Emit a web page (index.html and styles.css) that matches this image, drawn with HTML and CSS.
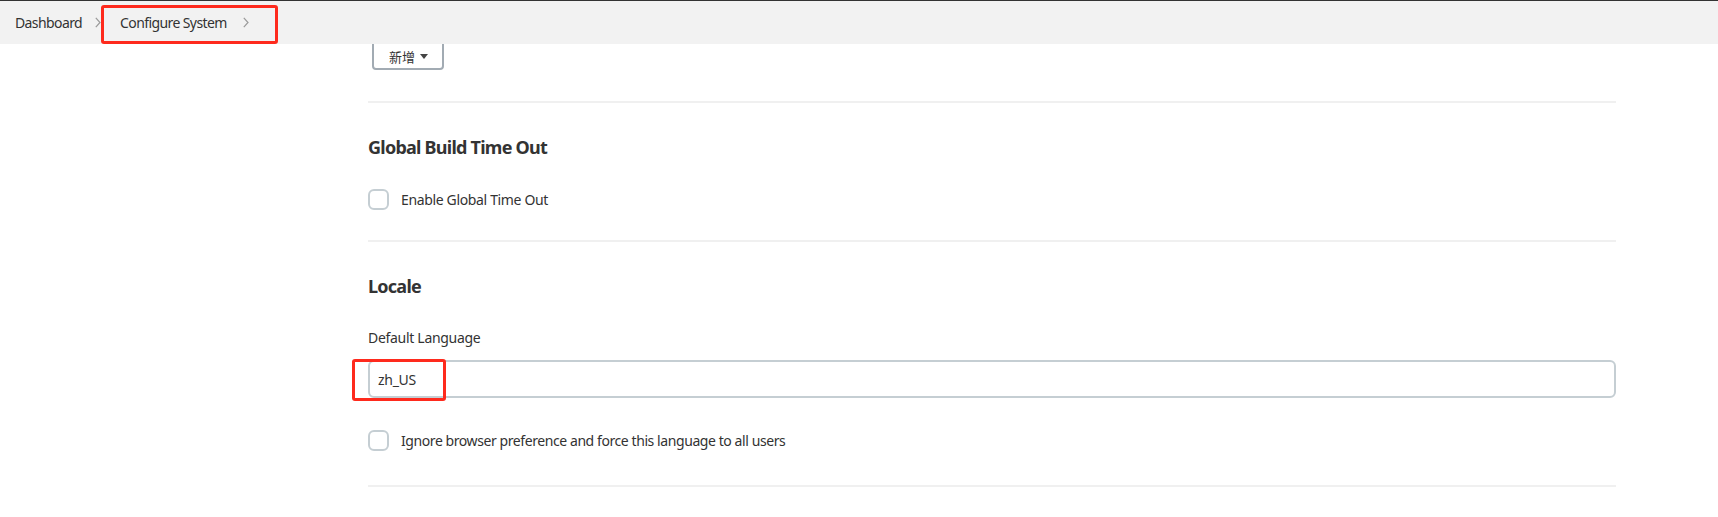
FILE: index.html
```html
<!DOCTYPE html>
<html lang="en">
<head>
<meta charset="utf-8">
<title>Configure System</title>
<link rel="stylesheet" href="styles.css">
</head>
<body>
<header class="breadcrumbs">
  <ol class="crumbs">
    <li class="crumb"><a class="crumb-link">Dashboard</a></li>
    <li class="crumb-sep"><svg class="chev" viewBox="0 0 6 11" width="6" height="11"><path d="M0.8 0.8 L5 5.5 L0.8 10.2" fill="none" stroke="#9a9a9a" stroke-width="1.2"/></svg></li>
    <li class="crumb crumb-current">
      <a class="crumb-link">Configure System</a>
      <svg class="chev" viewBox="0 0 6 11" width="6" height="11"><path d="M0.8 0.8 L5 5.5 L0.8 10.2" fill="none" stroke="#9a9a9a" stroke-width="1.2"/></svg>
      <span class="annot annot-crumb"></span>
    </li>
  </ol>
</header>
<main class="content">
  <div class="add-row">
    <button class="dropdown-btn" type="button">新增<span class="caret"></span></button>
  </div>
  <section class="section section-timeout">
    <h2 class="section-title">Global Build Time Out</h2>
    <label class="checkbox checkbox-first"><span class="box"></span><span class="checkbox-text">Enable Global Time Out</span></label>
  </section>
  <section class="section section-locale">
    <h2 class="section-title">Locale</h2>
    <div class="field-label">Default Language</div>
    <div class="input-wrap">
      <input class="text-input" type="text" value="zh_US">
      <span class="annot annot-input"></span>
    </div>
    <label class="checkbox checkbox-last"><span class="box"></span><span class="checkbox-text">Ignore browser preference and force this language to all users</span></label>
  </section>
  <div class="section section-end"></div>
</main>
</body>
</html>
```
FILE: styles.css
```css
* { box-sizing: border-box; }
html, body { margin: 0; padding: 0; background: #fff; }
body {
  font-family: "Noto Sans", "Open Sans", "Noto Sans CJK SC", sans-serif;
  color: #333;
  font-size: 14px;
}
.breadcrumbs {
  position: sticky;
  top: 0;
  z-index: 5;
  height: 44px;
  background: #f2f2f2;
  border-top: 1px solid #333;
}
.crumbs {
  list-style: none;
  margin: 0;
  padding: 0 0 0 15px;
  height: 43px;
  display: flex;
  align-items: center;
}
.crumb { display: flex; align-items: center; height: 20px; line-height: 20px; }
.crumb-link { font-size: 14px; color: #333; letter-spacing: -0.6px; }
.crumb-sep { display: flex; align-items: center; margin: 0 0 0 13px; }
.chev { display: block; }
.crumb-current { position: relative; margin-left: 19px; gap: 16px; }
.annot {
  position: absolute;
  border: 3px solid #fe2a1d;
  border-radius: 3px;
  pointer-events: none;
}
.annot-crumb { left: -19px; top: -8px; width: 177px; height: 39px; }
.content {
  margin-left: 368px;
  width: 1248px;
}
.add-row { margin-top: -10px; margin-left: 4px; }
.dropdown-btn {
  display: flex;
  align-items: center;
  height: 36px;
  width: 72px;
  padding: 9px 0 0 15px;
  background: #fff;
  border: 2px solid #a2abb3;
  border-radius: 4px;
  font-family: "Noto Sans CJK SC", sans-serif;
  font-size: 13px;
  color: #333;
}
.caret {
  display: inline-block;
  margin-left: 5px;
  width: 0; height: 0;
  border-left: 4px solid transparent;
  border-right: 4px solid transparent;
  border-top: 5px solid #444;
}
.section {
  border-top: 2px solid #f0f0f0;
  padding: 30px 0 28px;
}
.add-row + .section { margin-top: 31px; }
.section-title {
  margin: 0;
  font-size: 18px;
  line-height: 28px;
  font-weight: 700;
  letter-spacing: -0.75px;
  color: #333;
}
.checkbox {
  display: flex;
  align-items: center;
  gap: 12px;
  height: 22px;
}
.checkbox-first { margin-top: 27px; }
.section-timeout { padding-bottom: 30px; }
.box {
  width: 21px; height: 21px;
  border: 2px solid #c5ced3;
  border-radius: 6px;
  background: #fff;
}
.checkbox-text { font-size: 14px; letter-spacing: -0.35px; color: #333; }
.checkbox-last .checkbox-text { letter-spacing: -0.42px; }
.field-label {
  margin-top: 28px;
  line-height: 20px;
  font-size: 14px;
  letter-spacing: -0.3px;
}
.input-wrap { position: relative; margin-top: 12px; }
.text-input {
  display: block;
  width: 100%;
  height: 38px;
  border: 2px solid #c5ced3;
  border-radius: 6px;
  padding: 0 8px;
  font-family: "Noto Sans", sans-serif;
  font-size: 14px;
  color: #333;
  letter-spacing: -0.3px;
  outline: none;
}
.annot-input { left: -16px; top: -1px; width: 94px; height: 42px; }
.checkbox-last { margin-top: 31px; }
.section-locale { padding-bottom: 34px; }
.section-end { padding: 0; height: 30px; }
```
